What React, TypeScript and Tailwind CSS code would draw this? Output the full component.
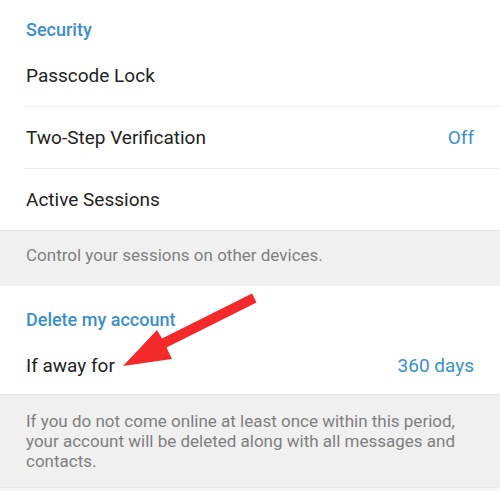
import React from "react";

const font = { fontFamily: "Roboto, 'Noto Sans', sans-serif" };

function Row({ label, value, divider }: { label: string; value?: string; divider?: boolean }) {
  return (
    <div className="flex flex-col">
      <div className="flex h-[61px] items-center justify-between pl-[26px] pr-[26px] pt-[2px]">
        <span className="text-[19px] text-[#222222]">{label}</span>
        {value && <span className="text-[19px] text-[#3b8fce]">{value}</span>}
      </div>
      {divider && <div className="ml-[24px] h-px bg-[#ececec]" />}
    </div>
  );
}

export default function App() {
  return (
    <div className="relative h-[491px] w-[500px] overflow-hidden bg-white" style={font}>
      <div className="flex flex-col">
        <div className="flex h-[45px] items-start pl-[26px] pt-[18px]">
          <span className="text-[18px] font-medium leading-[24px] text-[#3b8fce]">Security</span>
        </div>
        <Row label="Passcode Lock" divider />
        <Row label="Two-Step Verification" value="Off" divider />
        <Row label="Active Sessions" />
        <div className="h-[56px] border-t border-[#e4e4e4] bg-[#f0f0f0] pl-[26px] pt-[13px]">
          <span className="text-[17px] leading-[20px] text-[#7f7f7f]">Control your sessions on other devices.</span>
        </div>
        <div className="flex flex-col pl-[26px] pr-[26px] pt-[22px] pb-[16px]">
          <span className="text-[18px] font-medium leading-[24px] text-[#3b8fce]">Delete my account</span>
          <div className="mt-[22px] flex items-center justify-between">
            <span className="text-[19px] leading-[24px] text-[#222222]">If away for</span>
            <span className="text-[19px] leading-[24px] text-[#3b8fce]">360 days</span>
          </div>
        </div>
        <div className="h-[93px] border-t border-[#e4e4e4] bg-[#f0f0f0] pl-[26px] pr-[40px] pt-[16px]">
          <p className="text-[17px] leading-[20px] text-[#7f7f7f]">
            If you do not come online at least once within this period, your account will be deleted along with all messages and contacts.
          </p>
        </div>
        <div className="h-[5px] border-t border-[#e8e8e8] bg-[#f5f5f5]" />
      </div>
      <svg className="absolute left-0 top-0" width="500" height="491" viewBox="0 0 500 491">
        <polygon
          points="252,293.5 162,338.5 157,330 123,366 172,359 166.5,347.5 256.5,302.5"
          fill="#f42a2a"
        />
      </svg>
    </div>
  );
}
